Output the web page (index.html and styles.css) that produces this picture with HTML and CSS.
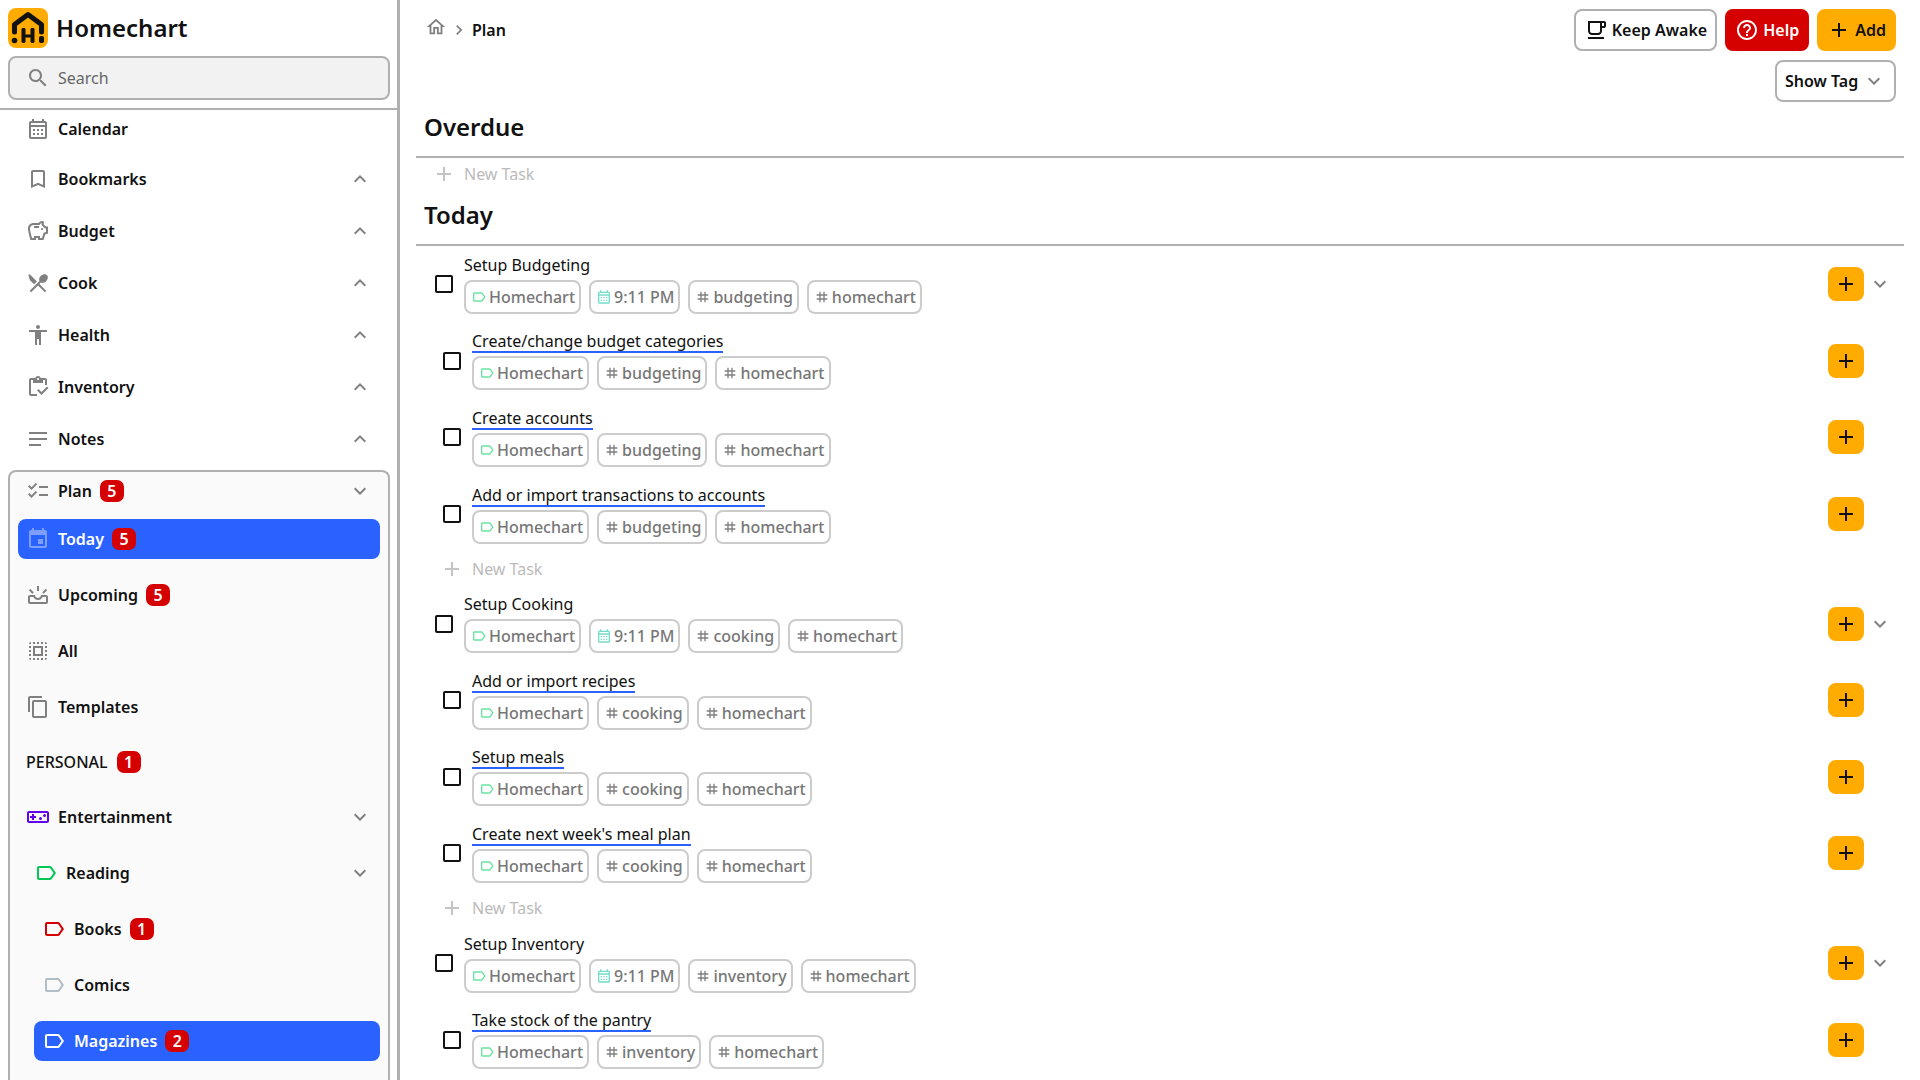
FILE: index.html
```html
<!DOCTYPE html>
<html lang="en">
<head>
<meta charset="utf-8">
<title>Homechart</title>
<link rel="stylesheet" href="styles.css">
</head>
<body>
<svg class="sprite" xmlns="http://www.w3.org/2000/svg">
<symbol id="i-calendar" viewBox="0 0 24 24"><path d="M19 4h-1V2h-2v2H8V2H6v2H5c-1.11 0-1.99.9-1.99 2L3 20c0 1.1.89 2 2 2h14c1.1 0 2-.9 2-2V6c0-1.1-.9-2-2-2zm0 16H5V10h14v10zm0-12H5V6h14v2zM9 14H7v-2h2v2zm4 0h-2v-2h2v2zm4 0h-2v-2h2v2zm-8 4H7v-2h2v2zm4 0h-2v-2h2v2zm4 0h-2v-2h2v2z"/></symbol>
<symbol id="i-bookmark" viewBox="0 0 24 24"><path d="M17 3H7c-1.1 0-2 .9-2 2v16l7-3 7 3V5c0-1.1-.9-2-2-2zm0 15l-5-2.18L7 18V5h10v13z"/></symbol>
<symbol id="i-savings" viewBox="0 0 24 24"><path d="M15 10c0-.55.45-1 1-1s1 .45 1 1-.45 1-1 1-1-.45-1-1zM8 9h5V7H8v2zm14-1.5v6.97l-2.82.94L17.5 21H12v-2h-2v2H4.5S2 12.54 2 9.5 4.46 4 7.5 4h5c.91-1.21 2.36-2 4-2 .83 0 1.5.67 1.5 1.5 0 .21-.04.4-.12.58-.14.32-.26.69-.32 1.09l2.27 2.33H22zm-2 2h-1l-3.5-3.5c0-.65.09-1.29.26-1.91-.97.25-1.76.97-2.09 1.91H7.5C5.57 6 4 7.57 4 9.5c0 1.88 1.22 6.65 2.01 9.5H8v-2h6v2h2.01l1.55-5.15 2.44-.82V9.5z"/></symbol>
<symbol id="i-cook" viewBox="0 0 24 24"><path d="M14.88 11.53c1.53.71 3.68.21 5.27-1.38 1.91-1.91 2.28-4.65.81-6.12-1.46-1.46-4.2-1.1-6.12.81-1.59 1.59-2.09 3.74-1.38 5.27L3.7 19.87l1.41 1.41L12 14.41l6.88 6.88 1.41-1.41L13.41 13l1.47-1.47zM8.1 13.34l2.83-2.83L4.5 4 3 3 2.5 4.5 3.91 9.16z"/></symbol>
<symbol id="i-health" viewBox="0 0 24 24"><path d="M12 2c1.1 0 2 .9 2 2s-.9 2-2 2-2-.9-2-2 .9-2 2-2zm9 7h-6v13h-2v-6h-2v6H9V9H3V7h18v2z"/></symbol>
<symbol id="i-inventory" viewBox="0 0 24 24"><path d="M5 5h2v3h10V5h2v5h2V5c0-1.1-.9-2-2-2h-4.18C14.4 1.84 13.3 1 12 1s-2.4.84-2.82 2H5c-1.1 0-2 .9-2 2v14c0 1.1.9 2 2 2h6v-2H5V5zm7-2c.55 0 1 .45 1 1s-.45 1-1 1-1-.45-1-1 .45-1 1-1z"/><path d="M21 11.5 15.51 17l-3.01-3-1.5 1.5 4.51 4.5 6.99-7z"/></symbol>
<symbol id="i-notes" viewBox="0 0 24 24"><path d="M3 19h12v-2H3v2zM3 5v2h18V5H3zm0 8h18v-2H3v2z"/></symbol>
<symbol id="i-checklist" viewBox="0 0 24 24"><path d="M22 7h-9v2h9V7zm0 8h-9v2h9v-2zM5.54 11 2 7.46l1.41-1.41 2.12 2.12 4.24-4.24 1.41 1.41L5.54 11zm0 8L2 15.46l1.41-1.41 2.12 2.12 4.24-4.24 1.41 1.41L5.54 19z"/></symbol>
<symbol id="i-today" viewBox="0 0 24 24"><path d="M17 12h-5v5h5v-5zM16 1v2H8V1H6v2H5c-1.11 0-1.99.9-1.99 2L3 19c0 1.1.89 2 2 2h14c1.1 0 2-.9 2-2V5c0-1.1-.9-2-2-2h-1V1h-2zm3 18H5V8h14v11z"/></symbol>
<symbol id="i-upcoming" viewBox="0 0 24 24"><path d="M21.16 7.26l-1.41-1.41-3.56 3.55 1.41 1.41s3.45-3.52 3.56-3.55zM11 3v5h2V3h-2zM6.4 10.81l1.41-1.41-3.56-3.55-1.41 1.41s3.45 3.52 3.56 3.55zM20 12h-5c0 1.66-1.34 3-3 3s-3-1.34-3-3H4c-1.1 0-2 .9-2 2v5c0 1.1.9 2 2 2h16c1.1 0 2-.9 2-2v-5c0-1.1-.9-2-2-2zm0 7H4v-5h3.42c.77 1.76 2.54 3 4.58 3s3.81-1.24 4.58-3H20v5z"/></symbol>
<symbol id="i-all" viewBox="0 0 24 24"><path d="M3 5h2V3c-1.1 0-2 .9-2 2zm0 8h2v-2H3v2zm4 8h2v-2H7v2zM3 9h2V7H3v2zm10-6h-2v2h2V3zm6 0v2h2c0-1.1-.9-2-2-2zM5 21v-2H3c0 1.1.9 2 2 2zm-2-4h2v-2H3v2zM9 3H7v2h2V3zm2 18h2v-2h-2v2zm8-8h2v-2h-2v2zm0 8c1.1 0 2-.9 2-2h-2v2zm0-12h2V7h-2v2zm0 8h2v-2h-2v2zm-4 4h2v-2h-2v2zm0-16h2V3h-2v2zM7 17h10V7H7v10zm2-8h6v6H9V9z"/></symbol>
<symbol id="i-copy" viewBox="0 0 24 24"><path d="M16 1H4c-1.1 0-2 .9-2 2v14h2V3h12V1zm3 4H8c-1.1 0-2 .9-2 2v14c0 1.1.9 2 2 2h11c1.1 0 2-.9 2-2V7c0-1.1-.9-2-2-2zm0 16H8V7h11v14z"/></symbol>
<symbol id="i-label" viewBox="0 0 24 24"><path d="M17.63 5.84C17.27 5.33 16.67 5 16 5L5 5.01C3.9 5.01 3 5.9 3 7v10c0 1.1.9 1.99 2 1.99L16 19c.67 0 1.27-.33 1.63-.84L22 12l-4.37-6.16zM16 17H5V7h11l3.55 5L16 17z"/></symbol>
<symbol id="i-game" viewBox="0 0 24 24"><path d="M21 6H3c-1.1 0-2 .9-2 2v8c0 1.1.9 2 2 2h18c1.1 0 2-.9 2-2V8c0-1.1-.9-2-2-2zm0 10H3V8h18v8zM6 15h2v-2h2v-2H8V9H6v2H4v2h2z"/><circle cx="14.5" cy="13.5" r="1.5"/><circle cx="18.5" cy="10.5" r="1.5"/></symbol>
<symbol id="i-home" viewBox="0 0 24 24"><path d="M12 5.69l5 4.5V18h-2v-6H9v6H7v-7.81l5-4.5M12 3L2 12h3v8h6v-6h2v6h6v-8h3L12 3z"/></symbol>
<symbol id="i-more" viewBox="0 0 24 24"><path d="M16.59 8.59 12 13.17 7.41 8.59 6 10l6 6 6-6z"/></symbol>
<symbol id="i-less" viewBox="0 0 24 24"><path d="M12 8l-6 6 1.41 1.41L12 10.83l4.59 4.58L18 14z"/></symbol>
<symbol id="i-right" viewBox="0 0 24 24"><path d="M10 6 8.59 7.41 13.17 12l-4.58 4.59L10 18l6-6z"/></symbol>
<symbol id="i-search" viewBox="0 0 24 24"><path d="M15.5 14h-.79l-.28-.27C15.41 12.59 16 11.11 16 9.5 16 5.91 13.09 3 9.5 3S3 5.91 3 9.5 5.91 16 9.5 16c1.61 0 3.09-.59 4.23-1.57l.27.28v.79l5 4.99L20.49 19l-4.99-5zm-6 0C7.01 14 5 11.99 5 9.5S7.01 5 9.5 5 14 7.01 14 9.5 11.99 14 9.5 14z"/></symbol>
<symbol id="i-add" viewBox="0 0 24 24"><path d="M19 13h-6v6h-2v-6H5v-2h6V5h2v6h6v2z"/></symbol>
<symbol id="i-cafe" viewBox="0 0 24 24"><path d="M20 3H4v10c0 2.21 1.79 4 4 4h6c2.21 0 4-1.79 4-4v-3h2c1.11 0 2-.89 2-2V5c0-1.11-.89-2-2-2zm-4 10c0 1.1-.9 2-2 2H8c-1.1 0-2-.9-2-2V5h10v8zm4-5h-2V5h2v3zM4 19h16v2H4z"/></symbol>
<symbol id="i-help" viewBox="0 0 24 24"><path d="M11 18h2v-2h-2v2zm1-16C6.48 2 2 6.48 2 12s4.48 10 10 10 10-4.48 10-10S17.52 2 12 2zm0 18c-4.41 0-8-3.59-8-8s3.59-8 8-8 8 3.59 8 8-3.59 8-8 8zm0-14c-2.21 0-4 1.79-4 4h2c0-1.1.9-2 2-2s2 .9 2 2c0 2-3 1.75-3 5h2c0-2.25 3-2.5 3-5 0-2.21-1.79-4-4-4z"/></symbol>
<symbol id="i-tag" viewBox="0 0 24 24"><path d="M20 10V8h-4V4h-2v4h-4V4H8v4H4v2h4v4H4v2h4v4h2v-4h4v4h2v-4h4v-2h-4v-4h4zm-6 4h-4v-4h4v4z"/></symbol>
</svg>

<div class="app">
  <aside class="sidebar">
    <div class="side-head">
      <div class="brand">
        <svg class="logo" viewBox="0 0 40 40" aria-hidden="true">
          <rect width="40" height="40" rx="8" fill="#ffab00"/>
          <path d="M6.5 24V16.5L20 6.5l13.5 10V24" fill="none" stroke="#111" stroke-width="5" stroke-linecap="round" stroke-linejoin="round"/>
          <circle cx="6.5" cy="32.5" r="2.8" fill="#111"/>
          <rect x="13.5" y="20" width="4" height="15" rx="1.4" fill="#111"/>
          <rect x="22.5" y="20" width="4" height="15" rx="1.4" fill="#111"/>
          <rect x="15" y="26.5" width="10" height="3" fill="#111"/>
          <rect x="31" y="28" width="5" height="7" rx="1.8" fill="#111"/>
        </svg>
        <span class="brand-name">Homechart</span>
      </div>
      <div class="search">
        <svg class="ico ico-grey"><use href="#i-search"/></svg>
        <span>Search</span>
      </div>
    </div>
    <nav class="nav">
      <div class="group group-top">
        <div class="item item-first"><svg class="ico ico-grey"><use href="#i-calendar"/></svg><span class="lbl">Calendar</span></div>
        <div class="item item-s"><svg class="ico ico-grey"><use href="#i-bookmark"/></svg><span class="lbl">Bookmarks</span><svg class="ico ico-grey chev"><use href="#i-less"/></svg></div>
        <div class="item item-s"><svg class="ico ico-grey"><use href="#i-savings"/></svg><span class="lbl">Budget</span><svg class="ico ico-grey chev"><use href="#i-less"/></svg></div>
        <div class="item item-s"><svg class="ico ico-grey"><use href="#i-cook"/></svg><span class="lbl">Cook</span><svg class="ico ico-grey chev"><use href="#i-less"/></svg></div>
        <div class="item item-s"><svg class="ico ico-grey"><use href="#i-health"/></svg><span class="lbl">Health</span><svg class="ico ico-grey chev"><use href="#i-less"/></svg></div>
        <div class="item item-s"><svg class="ico ico-grey"><use href="#i-inventory"/></svg><span class="lbl">Inventory</span><svg class="ico ico-grey chev"><use href="#i-less"/></svg></div>
        <div class="item"><svg class="ico ico-grey"><use href="#i-notes"/></svg><span class="lbl">Notes</span><svg class="ico ico-grey chev"><use href="#i-less"/></svg></div>
      </div>
      <div class="group group-box">
        <div class="item item-head"><svg class="ico ico-grey"><use href="#i-checklist"/></svg><span class="lbl">Plan</span><span class="badge">5</span><svg class="ico ico-grey chev"><use href="#i-more"/></svg></div>
        <div class="item item-m active"><svg class="ico ico-faded"><use href="#i-today"/></svg><span class="lbl">Today</span><span class="badge">5</span></div>
        <div class="item item-m"><svg class="ico ico-grey"><use href="#i-upcoming"/></svg><span class="lbl">Upcoming</span><span class="badge">5</span></div>
        <div class="item item-m"><svg class="ico ico-grey"><use href="#i-all"/></svg><span class="lbl">All</span></div>
        <div class="item item-m"><svg class="ico ico-grey"><use href="#i-copy"/></svg><span class="lbl">Templates</span></div>
        <div class="item item-m item-section"><span class="section">PERSONAL</span><span class="badge">1</span></div>
        <div class="item item-m"><svg class="ico ico-purple"><use href="#i-game"/></svg><span class="lbl">Entertainment</span><svg class="ico ico-grey chev"><use href="#i-more"/></svg></div>
        <div class="item item-m indent1"><svg class="ico ico-green"><use href="#i-label"/></svg><span class="lbl">Reading</span><svg class="ico ico-grey chev"><use href="#i-more"/></svg></div>
        <div class="item item-m indent2"><svg class="ico ico-red"><use href="#i-label"/></svg><span class="lbl">Books</span><span class="badge">1</span></div>
        <div class="item item-m indent2"><svg class="ico ico-slate"><use href="#i-label"/></svg><span class="lbl">Comics</span></div>
        <div class="item item-m indent2 active"><svg class="ico ico-white"><use href="#i-label"/></svg><span class="lbl">Magazines</span><span class="badge">2</span></div>
      </div>
    </nav>
  </aside>

  <main class="main">
    <div class="topbar">
      <div class="crumbs">
        <svg class="ico-crumb ico-grey"><use href="#i-home"/></svg>
        <svg class="ico-crumb ico-grey"><use href="#i-right"/></svg>
        <span class="crumb-text">Plan</span>
      </div>
      <div class="actions">
        <button class="btn btn-outline"><svg class="ico"><use href="#i-cafe"/></svg>Keep Awake</button>
        <button class="btn btn-red"><svg class="ico ico-white"><use href="#i-help"/></svg>Help</button>
        <button class="btn btn-amber"><svg class="ico"><use href="#i-add"/></svg>Add</button>
      </div>
    </div>
    <div class="filter-row">
      <button class="btn btn-outline btn-select">Show Tag<svg class="ico ico-grey"><use href="#i-more"/></svg></button>
    </div>

    <h2 class="heading heading-overdue">Overdue</h2>
    <div class="new-task new-task-top"><svg class="ico ico-light"><use href="#i-add"/></svg><span>New Task</span></div>

    <h2 class="heading heading-today">Today</h2>

    <div class="task">
      <span class="check"></span>
      <div class="task-body">
        <div class="task-title">Setup Budgeting</div>
        <div class="chips">
          <span class="chip"><svg class="chip-ico c-green"><use href="#i-label"/></svg>Homechart</span>
          <span class="chip"><svg class="chip-ico c-teal"><use href="#i-calendar"/></svg>9:11 PM</span>
          <span class="chip"><svg class="chip-ico c-grey"><use href="#i-tag"/></svg>budgeting</span>
          <span class="chip"><svg class="chip-ico c-grey"><use href="#i-tag"/></svg>homechart</span>
        </div>
      </div>
      <span class="plus"><svg class="ico"><use href="#i-add"/></svg></span>
      <svg class="ico ico-grey task-chev"><use href="#i-more"/></svg>
    </div>
    <div class="task task-child">
      <span class="check"></span>
      <div class="task-body">
        <div class="task-title"><span class="link">Create/change budget categories</span></div>
        <div class="chips">
          <span class="chip"><svg class="chip-ico c-green"><use href="#i-label"/></svg>Homechart</span>
          <span class="chip"><svg class="chip-ico c-grey"><use href="#i-tag"/></svg>budgeting</span>
          <span class="chip"><svg class="chip-ico c-grey"><use href="#i-tag"/></svg>homechart</span>
        </div>
      </div>
      <span class="plus"><svg class="ico"><use href="#i-add"/></svg></span>
      <span class="task-chev"></span>
    </div>
    <div class="task task-child">
      <span class="check"></span>
      <div class="task-body">
        <div class="task-title"><span class="link">Create accounts</span></div>
        <div class="chips">
          <span class="chip"><svg class="chip-ico c-green"><use href="#i-label"/></svg>Homechart</span>
          <span class="chip"><svg class="chip-ico c-grey"><use href="#i-tag"/></svg>budgeting</span>
          <span class="chip"><svg class="chip-ico c-grey"><use href="#i-tag"/></svg>homechart</span>
        </div>
      </div>
      <span class="plus"><svg class="ico"><use href="#i-add"/></svg></span>
      <span class="task-chev"></span>
    </div>
    <div class="task task-child">
      <span class="check"></span>
      <div class="task-body">
        <div class="task-title"><span class="link">Add or import transactions to accounts</span></div>
        <div class="chips">
          <span class="chip"><svg class="chip-ico c-green"><use href="#i-label"/></svg>Homechart</span>
          <span class="chip"><svg class="chip-ico c-grey"><use href="#i-tag"/></svg>budgeting</span>
          <span class="chip"><svg class="chip-ico c-grey"><use href="#i-tag"/></svg>homechart</span>
        </div>
      </div>
      <span class="plus"><svg class="ico"><use href="#i-add"/></svg></span>
      <span class="task-chev"></span>
    </div>
    <div class="new-task new-task-child"><svg class="ico ico-light"><use href="#i-add"/></svg><span>New Task</span></div>

    <div class="task">
      <span class="check"></span>
      <div class="task-body">
        <div class="task-title">Setup Cooking</div>
        <div class="chips">
          <span class="chip"><svg class="chip-ico c-green"><use href="#i-label"/></svg>Homechart</span>
          <span class="chip"><svg class="chip-ico c-teal"><use href="#i-calendar"/></svg>9:11 PM</span>
          <span class="chip"><svg class="chip-ico c-grey"><use href="#i-tag"/></svg>cooking</span>
          <span class="chip"><svg class="chip-ico c-grey"><use href="#i-tag"/></svg>homechart</span>
        </div>
      </div>
      <span class="plus"><svg class="ico"><use href="#i-add"/></svg></span>
      <svg class="ico ico-grey task-chev"><use href="#i-more"/></svg>
    </div>
    <div class="task task-child">
      <span class="check"></span>
      <div class="task-body">
        <div class="task-title"><span class="link">Add or import recipes</span></div>
        <div class="chips">
          <span class="chip"><svg class="chip-ico c-green"><use href="#i-label"/></svg>Homechart</span>
          <span class="chip"><svg class="chip-ico c-grey"><use href="#i-tag"/></svg>cooking</span>
          <span class="chip"><svg class="chip-ico c-grey"><use href="#i-tag"/></svg>homechart</span>
        </div>
      </div>
      <span class="plus"><svg class="ico"><use href="#i-add"/></svg></span>
      <span class="task-chev"></span>
    </div>
    <div class="task task-child">
      <span class="check"></span>
      <div class="task-body">
        <div class="task-title"><span class="link">Setup meals</span></div>
        <div class="chips">
          <span class="chip"><svg class="chip-ico c-green"><use href="#i-label"/></svg>Homechart</span>
          <span class="chip"><svg class="chip-ico c-grey"><use href="#i-tag"/></svg>cooking</span>
          <span class="chip"><svg class="chip-ico c-grey"><use href="#i-tag"/></svg>homechart</span>
        </div>
      </div>
      <span class="plus"><svg class="ico"><use href="#i-add"/></svg></span>
      <span class="task-chev"></span>
    </div>
    <div class="task task-child">
      <span class="check"></span>
      <div class="task-body">
        <div class="task-title"><span class="link">Create next week's meal plan</span></div>
        <div class="chips">
          <span class="chip"><svg class="chip-ico c-green"><use href="#i-label"/></svg>Homechart</span>
          <span class="chip"><svg class="chip-ico c-grey"><use href="#i-tag"/></svg>cooking</span>
          <span class="chip"><svg class="chip-ico c-grey"><use href="#i-tag"/></svg>homechart</span>
        </div>
      </div>
      <span class="plus"><svg class="ico"><use href="#i-add"/></svg></span>
      <span class="task-chev"></span>
    </div>
    <div class="new-task new-task-child"><svg class="ico ico-light"><use href="#i-add"/></svg><span>New Task</span></div>

    <div class="task">
      <span class="check"></span>
      <div class="task-body">
        <div class="task-title">Setup Inventory</div>
        <div class="chips">
          <span class="chip"><svg class="chip-ico c-green"><use href="#i-label"/></svg>Homechart</span>
          <span class="chip"><svg class="chip-ico c-teal"><use href="#i-calendar"/></svg>9:11 PM</span>
          <span class="chip"><svg class="chip-ico c-grey"><use href="#i-tag"/></svg>inventory</span>
          <span class="chip"><svg class="chip-ico c-grey"><use href="#i-tag"/></svg>homechart</span>
        </div>
      </div>
      <span class="plus"><svg class="ico"><use href="#i-add"/></svg></span>
      <svg class="ico ico-grey task-chev"><use href="#i-more"/></svg>
    </div>
    <div class="task task-child">
      <span class="check"></span>
      <div class="task-body">
        <div class="task-title"><span class="link">Take stock of the pantry</span></div>
        <div class="chips">
          <span class="chip"><svg class="chip-ico c-green"><use href="#i-label"/></svg>Homechart</span>
          <span class="chip"><svg class="chip-ico c-grey"><use href="#i-tag"/></svg>inventory</span>
          <span class="chip"><svg class="chip-ico c-grey"><use href="#i-tag"/></svg>homechart</span>
        </div>
      </div>
      <span class="plus"><svg class="ico"><use href="#i-add"/></svg></span>
      <span class="task-chev"></span>
    </div>
  </main>
</div>
</body>
</html>
```
FILE: styles.css
```css
* { box-sizing: border-box; }
html, body { margin: 0; height: 100%; overflow: hidden; }
body { font-family: "Noto Sans", sans-serif; font-size: 16px; color: #111; background: #fff; }
.sprite { display: none; }
.app { display: flex; height: 1080px; overflow: hidden; }

/* Icons */
.ico { width: 24px; height: 24px; flex: none; fill: currentColor; }
.ico-grey { color: #808080; }
.ico-faded { color: #7d9dff; }
.ico-white { color: #fff; }
.ico-purple { color: #6200ea; }
.ico-green { color: #00c853; }
.ico-red { color: #d50000; }
.ico-slate { color: #b0bec5; }
.ico-light { color: #c4c4c4; }

/* Sidebar */
.sidebar { width: 400px; flex: none; border-right: 3px solid #b0b0b0; overflow: hidden; }
.side-head { padding: 8px; border-bottom: 2px solid #b0b0b0; height: 110px; width: 397px; }
.brand { display: flex; align-items: center; gap: 8px; height: 40px; margin-bottom: 8px; }
.logo { width: 40px; height: 40px; flex: none; }
.brand-name { font-size: 24px; font-weight: 600; margin-top: -2px; }
.search { display: flex; align-items: center; gap: 8px; width: 382px; height: 44px; padding: 0 16px; background: #f2f2f2; border: 2px solid #b0b0b0; border-radius: 8px; color: #666; }
.nav { padding: 0 8px; width: 397px; }
.group { border: 2px solid transparent; padding: 0 8px; width: 382px; }
.group-top { border-top: 0; border-bottom: 0; }
.group-box { border-color: #b0b0b0; border-radius: 8px 8px 0 0; border-bottom: 0; background: #fafafa; margin-top: 11px; height: 700px; }
.item { display: flex; align-items: center; gap: 8px; height: 40px; font-weight: 600; padding: 0 8px; border-radius: 8px; }
.item-first { height: 38px; margin-bottom: 11px; }
.item-s { margin-bottom: 12px; }
.item-head { height: 38px; margin-bottom: 9px; }
.item-m { margin-bottom: 16px; }
.item-section { height: 38px; }
.section { font-weight: 500; margin-right: 1px; }
.indent1 .ico:first-child { margin-left: 8px; }
.indent2 { margin-left: 16px; }
.lbl { white-space: nowrap; }
.chev { margin-left: auto; }
.badge { display: inline-flex; align-items: center; justify-content: center; min-width: 24px; height: 22px; padding: 0 6px; border-radius: 7px; background: #d50000; color: #fff; font-size: 16px; font-weight: 600; }
.active { background: #2962ff; color: #fff; }

/* Main */
.main { flex: 1; min-width: 0; padding: 9px 16px 0; overflow: hidden; }
.topbar { display: flex; align-items: center; justify-content: space-between; height: 42px; }
.crumbs { display: flex; align-items: center; padding-left: 9px; }
.ico-crumb { width: 22px; height: 22px; fill: currentColor; flex: none; }
.crumbs .ico-crumb:first-child { margin-top: -6px; margin-right: 2px; }
.crumbs .ico-crumb:nth-child(2) { width: 20px; height: 20px; margin-right: 3px; }
.crumb-text { font-weight: 600; }
.actions { display: flex; gap: 8px; padding-right: 8px; }
.btn { display: inline-flex; align-items: center; gap: 4px; height: 42px; padding: 0 8px; border-radius: 8px; border: 2px solid transparent; font: 600 16px "Noto Sans", sans-serif; color: #111; background: none; white-space: nowrap; }
.btn-outline { background: #fff; border-color: #b0b0b0; }
.btn-red { background: #d50000; color: #fff; border-color: #d50000; }
.btn-amber { background: #ffab00; border-color: #ffab00; }
.filter-row { display: flex; justify-content: flex-end; margin-top: 9px; padding-right: 8px; }
.btn-select { width: 121px; justify-content: space-between; }
.heading { margin: 0; font-size: 24px; font-weight: 600; line-height: 33px; padding-left: 8px; border-bottom: 2px solid #b0b0b0; }
.heading-overdue { margin-top: 8px; height: 48px; }
.heading-today { height: 57px; padding-top: 9px; }
.new-task { display: flex; align-items: center; gap: 8px; height: 33px; padding-left: 16px; color: #bbb; }
.new-task-top { height: 31px; }
.new-task-child { padding-left: 24px; }
.task { display: flex; align-items: center; height: 76.6px; padding: 0 12px 0 19px; }
.task-child { padding-left: 27px; }
.check { width: 18px; height: 18px; flex: none; border: 2px solid #111; border-radius: 2px; margin-right: 11px; }
.task-body { flex: 1; min-width: 0; padding-bottom: 2px; }
.task-title { line-height: 24px; margin-bottom: 3px; }
.link { border-bottom: 2px solid #2962ff; display: inline-block; line-height: 20px; height: 22px; }
.chips { display: flex; gap: 8px; }
.chip { display: inline-flex; align-items: center; height: 34px; padding: 0 4px 0 5px; border: 2px solid #ccc; border-radius: 8px; color: #777; font-weight: 550; white-space: nowrap; gap: 2px; }
.chip-ico { width: 16px; height: 16px; flex: none; fill: currentColor; }
.c-green { color: #69e3a0; }
.c-teal { color: #74dccb; }
.c-grey { color: #808080; }
.plus { display: flex; align-items: center; justify-content: center; width: 36px; height: 34px; flex: none; background: #ffab00; border-radius: 8px; }
.task-chev { width: 24px; height: 24px; flex: none; margin-left: 4px; display: block; }
```
